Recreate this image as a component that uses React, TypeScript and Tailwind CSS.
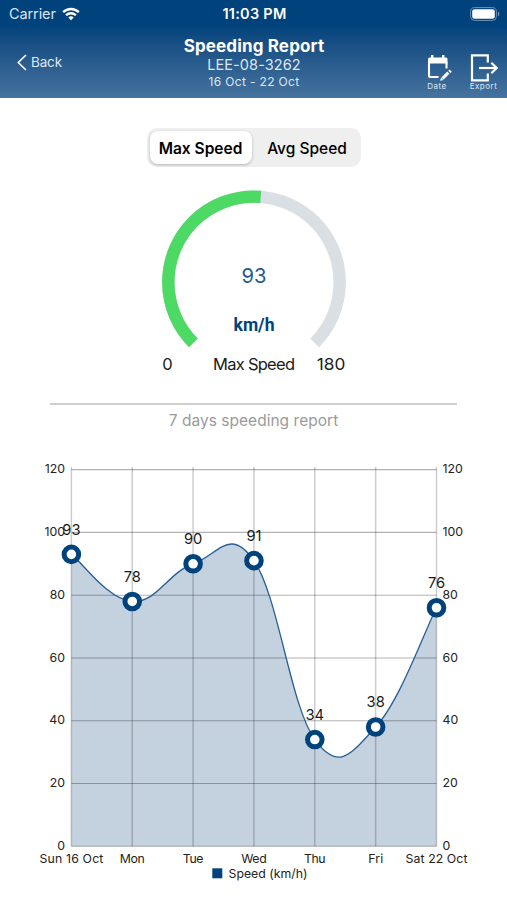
import React from 'react';

const NAVY = '#00437c';

const days = [
  { label: 'Sun 16 Oct', speed: 93, labelWidth: 64 },
  { label: 'Mon', speed: 78, labelWidth: 25 },
  { label: 'Tue', speed: 90, labelWidth: 20.5 },
  { label: 'Wed', speed: 91, labelWidth: 25.5 },
  { label: 'Thu', speed: 34, labelWidth: 21.5 },
  { label: 'Fri', speed: 38, labelWidth: 15 },
  { label: 'Sat 22 Oct', speed: 76, labelWidth: 62 },
];

const ticks = [0, 20, 40, 60, 80, 100, 120];

const LEFT = 71.4;
const RIGHT = 436.5;
const BOTTOM = 396.3;
const STEP = (RIGHT - LEFT) / 6;

const toX = (index: number) => LEFT + index * STEP;
const toY = (value: number) => BOTTOM - value * 3.139;

// Cubic line, each control point follows the slope between its neighbours
const buildLine = () => {
  const pts = days.map((d, i) => ({ x: toX(i), y: toY(d.speed) }));
  const last = pts.length - 1;
  let path = `M${pts[0].x},${pts[0].y}`;
  for (let i = 1; i <= last; i++) {
    const before = pts[Math.max(i - 2, 0)];
    const prev = pts[i - 1];
    const cur = pts[i];
    const next = pts[Math.min(i + 1, last)];
    path += ` C${prev.x + (cur.x - before.x) * 0.2},${prev.y + (cur.y - before.y) * 0.2}`;
    path += ` ${cur.x - (next.x - prev.x) * 0.2},${cur.y - (next.y - prev.y) * 0.2}`;
    path += ` ${cur.x},${cur.y}`;
  }
  return path;
};

const StatusBar = () => (
  <div className="grid h-7 grid-cols-3 items-center pl-[9px] pr-[7px]">
    <div className="flex items-center gap-[6px]">
      <span className="text-[14.5px] tracking-[-0.1px] text-[#d9e6f2]">Carrier</span>
      <svg width="18" height="14" viewBox="0 0 19 14" fill="none" stroke="white" strokeWidth="2.5">
        <path d="M1.2 5.1C5.8 0.6 13.2 0.6 17.8 5.1" />
        <path d="M4.3 8.3C7.2 5.5 11.8 5.5 14.7 8.3" />
        <path d="M9.5 13.6L6.6 10.6C8.2 9.1 10.8 9.1 12.4 10.6Z" fill="white" stroke="none" />
      </svg>
    </div>
    <span className="whitespace-nowrap text-center text-[14.5px] font-semibold tracking-[0.25px] text-white">11:03 PM</span>
    <svg className="mb-px justify-self-end" width="30" height="14" viewBox="0 0 30 14">
      <rect x="0.6" y="0.6" width="25.8" height="12.8" rx="4" fill="none" stroke="#6f93b7" />
      <rect x="2.2" y="2.2" width="22.6" height="9.6" rx="2.4" fill="white" />
      <path d="M28 4.6C29.8 5.4 29.8 8.6 28 9.4Z" fill="#7f9fbf" />
    </svg>
  </div>
);

const DateIcon = () => (
  <svg width="26" height="28" viewBox="0 0 26 28" fill="none" stroke="white" strokeWidth="2.1">
    <path d="M2 5Q2 3.5 3.5 3.5H20Q21.5 3.5 21.5 5V9.5H2Z" fill="white" stroke="none" />
    <path d="M6.2 1V5M17.2 1V5" strokeWidth="2.4" />
    <path d="M3 8V21.4Q3 23 4.6 23H12.5" />
    <path d="M20.5 8V14.5" />
    <path d="M16.6 24.4L22.4 18.6" strokeWidth="3" />
    <path d="M14.2 26.8L15 23.4L17.6 25.9Z" fill="white" stroke="none" />
    <path d="M22.9 16.1L25.1 18.3" strokeWidth="1.8" />
  </svg>
);

const ExportIcon = () => (
  <svg width="28" height="28" viewBox="0 0 28 28" fill="none" stroke="white" strokeWidth="2.2">
    <path d="M17.8 8.5V1.4H2V26.4H17.8V19.5" />
    <path d="M9 14H26.5" />
    <path d="M21.3 8.8L26.6 14L21.3 19.2" />
  </svg>
);

const Header = () => (
  <header className="h-[98px] bg-linear-to-b from-[#00427b] from-25% to-[#46739f]">
    <StatusBar />
    <div className="grid h-[70px] grid-cols-[130px_1fr_130px]">
      <button className="flex h-[68px] items-center gap-[4px] pl-[17px] text-[13.5px] tracking-[-0.15px] text-[#dbe7f3]">
        <svg width="10" height="17" viewBox="0 0 10 17" fill="none" stroke="white" strokeWidth="1.6">
          <path d="M9 1L1.3 8.5L9 16" />
        </svg>
        Back
      </button>
      <div className="flex flex-col items-center pt-2 pl-px text-[#dbe7f3]">
        <h1 className="text-[17px] font-bold leading-[20px] tracking-[0.15px] text-white">Speeding Report</h1>
        <p className="text-[14.5px] leading-[18px] tracking-[0.1px]">LEE-08-3262</p>
        <p className="text-[12px] leading-[15px] tracking-[0.35px]">16 Oct - 22 Oct</p>
      </div>
      <div className="flex items-start justify-end gap-[17.5px] pr-[9.5px] pt-[26px] text-[8px] leading-[9px] tracking-[0.5px] text-[#dbe7f3]">
        <button className="flex w-[26px] flex-col items-center">
          <DateIcon />
          <span className="mr-[4px]">Date</span>
        </button>
        <button className="flex w-[28px] flex-col items-center">
          <ExportIcon />
          Export
        </button>
      </div>
    </div>
  </header>
);

const SpeedToggle = () => (
  <div className="mx-auto mt-[30px] flex h-[39px] w-[214px] rounded-[10px] bg-[#efefef] p-[3px] text-black">
    <button className="w-[102px] whitespace-nowrap rounded-[8px] bg-white pt-[3px] text-[15.5px] font-semibold shadow-[0_1px_3px_rgba(0,0,0,0.25)]">
      Max Speed
    </button>
    <button className="flex-1 whitespace-nowrap pl-[5px] pt-[3px] text-[15.5px] font-medium">Avg Speed</button>
  </div>
);

const Gauge = () => (
  <svg width="507" height="216" viewBox="0 167 507 216" className="block">
    <g fill="none" strokeWidth="12.4" transform="rotate(135 254 282.3)">
      <circle cx="254" cy="282.3" r="85.7" stroke="#d9dfe2" pathLength="360" strokeDasharray="270 90" />
      <circle cx="254" cy="282.3" r="85.7" stroke="#4cd964" pathLength="360" strokeDasharray="139.5 220.5" />
    </g>
    <g textAnchor="middle" fill="#1a1a1a" fontSize="16.5">
      <text x="254" y="283" fontSize="20.5" fill="#265a91" textLength="25" lengthAdjust="spacingAndGlyphs">93</text>
      <text x="254" y="331" fontSize="19" fontWeight="700" fill={NAVY} className="font-['Roboto']" textLength="41" lengthAdjust="spacingAndGlyphs">km/h</text>
      <text x="167.5" y="370">0</text>
      <text x="254" y="370" textLength="82">Max Speed</text>
      <text x="331" y="370" textLength="28.5" lengthAdjust="spacingAndGlyphs">180</text>
    </g>
  </svg>
);

const SpeedChart = () => {
  const line = buildLine();
  return (
    <svg width="507" height="450" viewBox="0 0 507 450" className="block">
      <path d={`${line} V${BOTTOM} H${LEFT} Z`} fill="#c4d1df" />
      <g stroke="#000000" strokeWidth="1.5">
        {days.map((d, i) => (
          <line key={d.label} x1={toX(i)} x2={toX(i)} y1="17" y2={BOTTOM} strokeOpacity="0.2" />
        ))}
        {ticks.map((t) => (
          <line key={t} x1={LEFT} x2={RIGHT} y1={toY(t)} y2={toY(t)} strokeWidth="1.1" strokeOpacity="0.3" />
        ))}
      </g>
      <g fontSize="12.3" fill="#222222">
        {ticks.map((t) => (
          <g key={t}>
            <text x="65" y={toY(t) + 3.6} textAnchor="end">{t}</text>
            <text x="442.5" y={toY(t) + 3.6}>{t}</text>
          </g>
        ))}
        {days.map((d, i) => (
          <text key={d.label} x={toX(i)} y="413.3" textAnchor="middle" textLength={d.labelWidth}>{d.label}</text>
        ))}
        <rect x="212.3" y="418.3" width="10" height="10" fill={NAVY} />
        <text x="228.5" y="428" textLength="79">Speed (km/h)</text>
      </g>
      <path d={line} fill="none" stroke="#275f94" strokeWidth="1.3" />
      {days.map((d, i) => (
        <g key={d.label}>
          <circle cx={toX(i)} cy={toY(d.speed)} r="7.3" fill="white" stroke={NAVY} strokeWidth="5" />
          <text x={toX(i)} y={toY(d.speed) - 19.8} fontSize="14.7" fill="#1a1a1a" textAnchor="middle">{d.speed}</text>
        </g>
      ))}
    </svg>
  );
};

export default function App() {
  return (
    <div className="h-[900px] w-[507px] overflow-hidden bg-white font-['Inter',sans-serif]">
      <Header />
      <SpeedToggle />
      <Gauge />
      <div className="mx-[50px] mt-[20px] border-t-2 border-[#cfcfcf] text-center">
        <p className="mt-[6px] text-[15.5px] leading-5 tracking-[0.03px] text-[#9a9a9a]">7 days speeding report</p>
      </div>
      <div className="mt-[19px]">
        <SpeedChart />
      </div>
    </div>
  );
}
